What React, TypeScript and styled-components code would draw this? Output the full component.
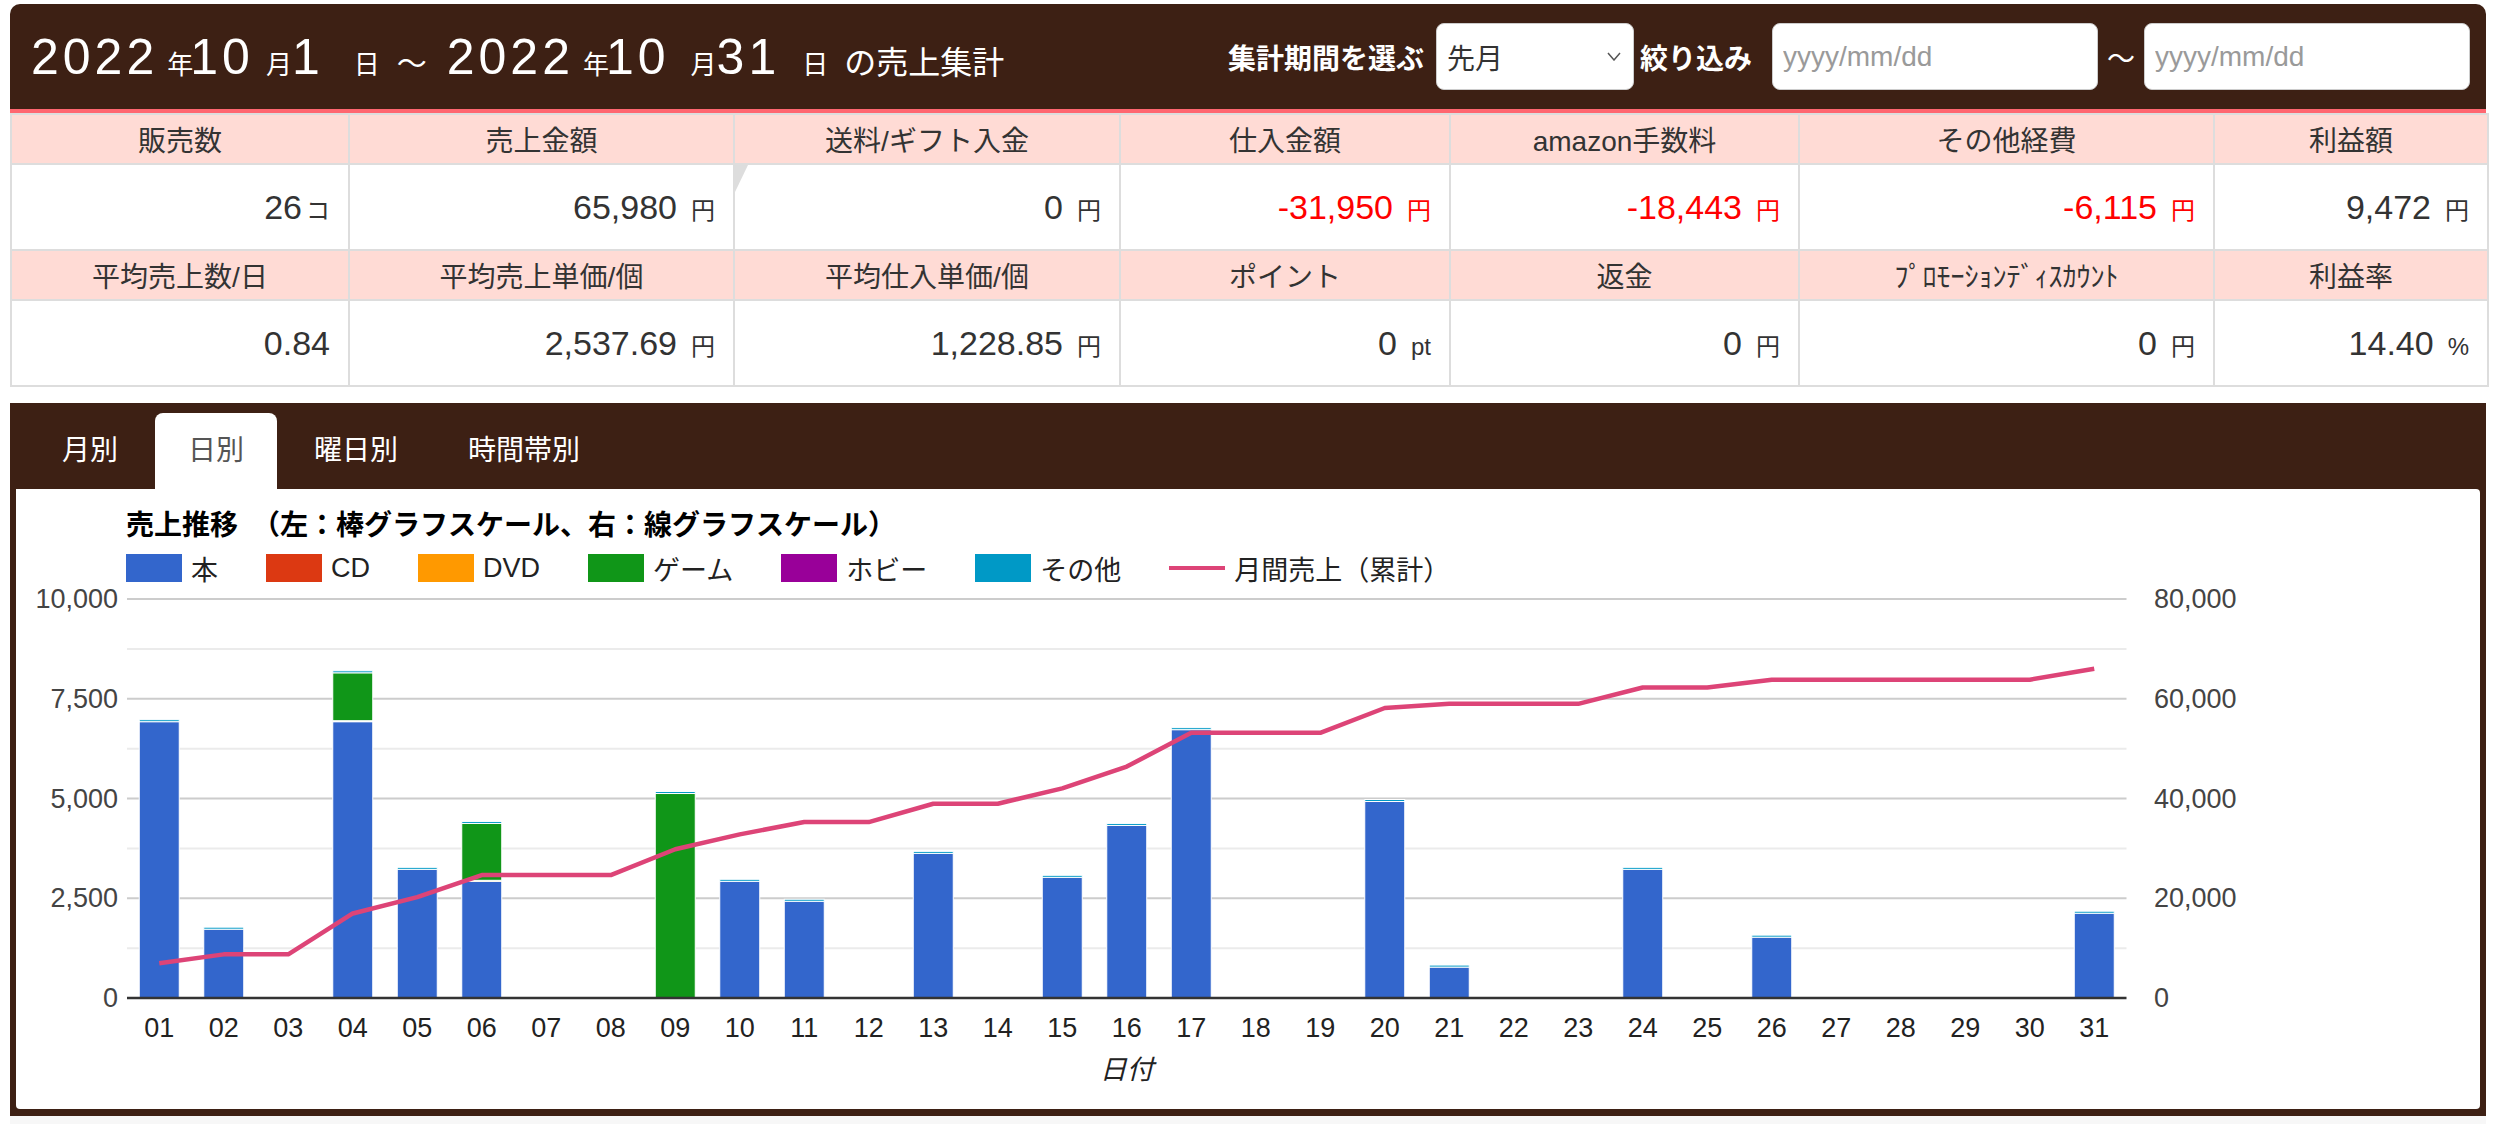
import React from "react";
import styled, { createGlobalStyle } from "styled-components";

const GlobalStyle = createGlobalStyle`
  * { box-sizing: border-box; }
  body {
    margin: 0;
    background: #fff;
    font-family: "Liberation Sans", "Noto Sans CJK JP", sans-serif;
    color: #333;
  }
`;

const BROWN = "#3d2014";

const Page = styled.div`
  padding: 4px 10px 0 10px;
`;

const Header = styled.header`
  display: flex;
  align-items: center;
  justify-content: space-between;
  height: 109px;
  padding: 0 16px 0 21px;
  background: ${BROWN};
  border-radius: 10px 10px 0 0;
  border-bottom: 4px solid #ff6670;
`;

const Title = styled.h1`
  margin: 0;
  color: #fff;
  font-weight: normal;
  white-space: nowrap;
  line-height: 1;
`;

const Big = styled.span<{ $ml?: number }>`
  font-size: 50px;
  letter-spacing: 4px;
  margin-left: ${(p) => p.$ml ?? 0}px;
`;

const Small = styled.span<{ $ml?: number; $size?: number }>`
  font-size: ${(p) => p.$size ?? 26}px;
  margin-left: ${(p) => p.$ml ?? 0}px;
`;

const Controls = styled.div`
  display: flex;
  align-items: center;
`;

const ControlLabel = styled.span<{ $gap: number }>`
  color: #fff;
  font-weight: bold;
  font-size: 28px;
  margin-right: ${(p) => p.$gap}px;
`;

const SelectBox = styled.div`
  display: flex;
  align-items: center;
  justify-content: space-between;
  width: 198px;
  height: 67px;
  padding: 0 12px 0 10px;
  margin-right: 6px;
  background: #fff;
  border: 1px solid #ccc;
  border-radius: 8px;
  font-size: 28px;
  color: #333;
`;

const DateInput = styled.input`
  width: 326px;
  height: 67px;
  padding: 0 10px;
  border: 1px solid #ccc;
  border-radius: 8px;
  font-family: "Liberation Sans", sans-serif;
  font-size: 28px;
  color: #333;
  &::placeholder {
    color: #9a9a9a;
  }
`;

const Tilde = styled.span`
  color: #fff;
  font-size: 28px;
  margin: 0 9px;
`;

const SummaryTable = styled.table`
  width: 100%;
  border-collapse: collapse;
  table-layout: fixed;
`;

const HeadCell = styled.th`
  height: 50px;
  background: #ffdbd5;
  border: 2px solid #ddd;
  font-size: 28px;
  font-weight: normal;
  color: #333;
  text-align: center;
  white-space: nowrap;
`;

const ValueCell = styled.td<{ $neg?: boolean; $mark?: boolean }>`
  position: relative;
  height: 86px;
  padding: 0 18px 0 0;
  border: 2px solid #ddd;
  text-align: right;
  white-space: nowrap;
  color: ${(p) => (p.$neg ? "#ff0000" : "#333")};
  &::before {
    content: "";
    display: ${(p) => (p.$mark ? "block" : "none")};
    position: absolute;
    left: 0;
    top: 0;
    border-top: 27px solid #ddd;
    border-right: 13px solid transparent;
  }
`;

const Num = styled.span`
  font-size: 34px;
`;

const UnitText = styled.span<{ $gap: number }>`
  font-size: 24px;
  margin-left: ${(p) => p.$gap}px;
`;

const ChartSection = styled.section`
  margin-top: 16px;
  padding: 0 6px 7px 6px;
  background: ${BROWN};
`;

const TabBar = styled.div`
  display: flex;
  padding: 10px 0 0 13px;
`;

const Tab = styled.div<{ $active?: boolean }>`
  height: 76px;
  line-height: 76px;
  padding: 0 33px;
  margin-right: 4px;
  font-size: 28px;
  color: ${(p) => (p.$active ? "#555" : "#fff")};
  background: ${(p) => (p.$active ? "#fff" : "transparent")};
  border-radius: 8px 8px 0 0;
`;

const ChartPanel = styled.div`
  height: 620px;
  padding-top: 18px;
  background: #fff;
  border-radius: 0 4px 4px 4px;
`;

const ChartTitle = styled.div`
  margin-left: 110px;
  font-size: 28px;
  font-weight: bold;
  line-height: 38px;
  color: #000;
`;

const Legend = styled.div`
  display: flex;
  align-items: center;
  height: 28px;
  margin: 9px 0 3px 110px;
`;

const LegendItem = styled.div`
  display: flex;
  align-items: center;
  margin-right: 48px;
  font-size: 27px;
  color: #222;
`;

const Swatch = styled.span<{ $color: string; $line?: boolean }>`
  display: inline-block;
  width: 56px;
  height: ${(p) => (p.$line ? 4 : 28)}px;
  margin-right: 9px;
  background: ${(p) => p.$color};
`;

const FooterStrip = styled.div`
  height: 12px;
  background: #f7f7f7;
`;

type Cell = { value: string; unit: string; gap?: number; neg?: boolean; mark?: boolean };

const rows: { heads: string[]; cells: Cell[] }[] = [
  {
    heads: ["販売数", "売上金額", "送料/ギフト入金", "仕入金額", "amazon手数料", "その他経費", "利益額"],
    cells: [
      { value: "26", unit: "コ", gap: 4 },
      { value: "65,980", unit: "円" },
      { value: "0", unit: "円", mark: true },
      { value: "-31,950", unit: "円", neg: true },
      { value: "-18,443", unit: "円", neg: true },
      { value: "-6,115", unit: "円", neg: true },
      { value: "9,472", unit: "円" },
    ],
  },
  {
    heads: ["平均売上数/日", "平均売上単価/個", "平均仕入単価/個", "ポイント", "返金", "ﾌﾟﾛﾓｰｼｮﾝﾃﾞｨｽｶｳﾝﾄ", "利益率"],
    cells: [
      { value: "0.84", unit: "" },
      { value: "2,537.69", unit: "円" },
      { value: "1,228.85", unit: "円" },
      { value: "0", unit: "pt" },
      { value: "0", unit: "円" },
      { value: "0", unit: "円" },
      { value: "14.40", unit: "%" },
    ],
  },
];

const colWidths = [338, 385, 386, 330, 349, 415, 274];

const series = [
  { key: "book", label: "本", color: "#3366cc" },
  { key: "cd", label: "CD", color: "#dc3912" },
  { key: "dvd", label: "DVD", color: "#ff9900" },
  { key: "game", label: "ゲーム", color: "#109618" },
  { key: "hobby", label: "ホビー", color: "#990099" },
  { key: "other", label: "その他", color: "#0099c6" },
];

// [本, CD, DVD, ゲーム, ホビー, その他] per day
const daily: number[][] = [
  [6925, 0, 0, 0, 0, 50],
  [1725, 0, 0, 0, 0, 50],
  [0, 0, 0, 0, 0, 0],
  [6925, 0, 25, 1200, 0, 50],
  [3225, 0, 0, 0, 0, 50],
  [2925, 0, 25, 1425, 0, 50],
  [0, 0, 0, 0, 0, 0],
  [0, 0, 0, 0, 0, 0],
  [0, 0, 0, 5125, 0, 50],
  [2925, 0, 0, 0, 0, 50],
  [2425, 0, 0, 0, 0, 50],
  [0, 0, 0, 0, 0, 0],
  [3625, 0, 0, 0, 0, 50],
  [0, 0, 0, 0, 0, 0],
  [3025, 0, 0, 0, 0, 50],
  [4325, 0, 0, 0, 0, 50],
  [6725, 0, 0, 0, 0, 50],
  [0, 0, 0, 0, 0, 0],
  [0, 0, 0, 0, 0, 0],
  [4925, 0, 0, 0, 0, 50],
  [775, 0, 0, 0, 0, 50],
  [0, 0, 0, 0, 0, 0],
  [0, 0, 0, 0, 0, 0],
  [3225, 0, 0, 0, 0, 50],
  [0, 0, 0, 0, 0, 0],
  [1525, 0, 0, 0, 0, 50],
  [0, 0, 0, 0, 0, 0],
  [0, 0, 0, 0, 0, 0],
  [0, 0, 0, 0, 0, 0],
  [0, 0, 0, 0, 0, 0],
  [2125, 0, 0, 0, 0, 50],
];

const SalesChart: React.FC = () => {
  const W = 2464;
  const H = 523;
  const left = 111;
  const step = 64.5;
  const top = 14;
  const bottom = 413;
  const k = (bottom - top) / 10000;
  const kLine = (bottom - top) / 80000;
  const font = `"Liberation Sans", "Noto Sans CJK JP", sans-serif`;

  let cum = 0;
  const points = daily.map((d, i) => {
    cum += d.reduce((a, b) => a + b, 0);
    return `${left + step * (i + 0.5)},${bottom - cum * kLine}`;
  });

  const leftLabels = ["10,000", "7,500", "5,000", "2,500", "0"];
  const rightLabels = ["80,000", "60,000", "40,000", "20,000", "0"];

  return (
    <svg width={W} height={H} viewBox={`0 0 ${W} ${H}`} style={{ display: "block" }}>
      {Array.from({ length: 8 }).map((_, i) => {
        const y = top + (i * (bottom - top)) / 8;
        return (
          <line key={i} x1={left} x2={left + step * 31} y1={y} y2={y} stroke={i % 2 ? "#ebebeb" : "#cccccc"} strokeWidth={2} />
        );
      })}
      {daily.map((d, i) => {
        const cx = left + step * (i + 0.5);
        let acc = 0;
        return d.map((v, s) => {
          if (!v) return null;
          const y = bottom - (acc + v) * k;
          acc += v;
          return <rect key={`${i}-${s}`} x={cx - 20} y={y} width={40} height={v * k} fill={series[s].color} stroke="#fff" strokeWidth={1} />;
        });
      })}
      <line x1={left} x2={left + step * 31} y1={bottom} y2={bottom} stroke="#333" strokeWidth={2.5} />
      <polyline points={points.join(" ")} fill="none" stroke="#dd4477" strokeWidth={4.5} strokeLinejoin="round" />
      {leftLabels.map((t, i) => (
        <text key={t} x={102} y={top + (i * (bottom - top)) / 4} textAnchor="end" dominantBaseline="central" fontSize={27} fill="#444" fontFamily={font}>
          {t}
        </text>
      ))}
      {rightLabels.map((t, i) => (
        <text key={t} x={2138} y={top + (i * (bottom - top)) / 4} dominantBaseline="central" fontSize={27} fill="#444" fontFamily={font}>
          {t}
        </text>
      ))}
      {daily.map((_, i) => (
        <text key={i} x={left + step * (i + 0.5)} y={443} textAnchor="middle" dominantBaseline="central" fontSize={27} fill="#222" fontFamily={font}>
          {String(i + 1).padStart(2, "0")}
        </text>
      ))}
      <text x={left + step * 15.5} y={485} textAnchor="middle" dominantBaseline="central" fontSize={27} fontStyle="italic" fill="#222" fontFamily={font}>
        日付
      </text>
    </svg>
  );
};

export default function App() {
  return (
    <Page>
      <GlobalStyle />
      <Header>
        <Title>
          <Big>2022</Big>
          <Small $ml={9}>年</Small>
          <Big $ml={-3}>10</Big>
          <Small $ml={12}>月</Small>
          <Big>1</Big>
          <Small $ml={30}>日</Small>
          <Small $ml={17} $size={30}>～</Small>
          <Big $ml={20}>2022</Big>
          <Small $ml={9}>年</Small>
          <Big $ml={-3}>10</Big>
          <Small $ml={21}>月</Small>
          <Big>31</Big>
          <Small $ml={22}>日</Small>
          <Small $ml={16} $size={32}>の売上集計</Small>
        </Title>
        <Controls>
          <ControlLabel $gap={12}>集計期間を選ぶ</ControlLabel>
          <SelectBox>
            <span>先月</span>
            <svg width="14" height="9" viewBox="0 0 14 9">
              <polyline points="1,1 7,8 13,1" fill="none" stroke="#555" strokeWidth="1.5" />
            </svg>
          </SelectBox>
          <ControlLabel $gap={20}>絞り込み</ControlLabel>
          <DateInput placeholder="yyyy/mm/dd" />
          <Tilde>～</Tilde>
          <DateInput placeholder="yyyy/mm/dd" />
        </Controls>
      </Header>

      <SummaryTable>
        <colgroup>
          {colWidths.map((w, i) => (
            <col key={i} style={{ width: w }} />
          ))}
        </colgroup>
        <tbody>
          {rows.map((r, ri) => (
            <React.Fragment key={ri}>
              <tr>
                {r.heads.map((h) => (
                  <HeadCell key={h}>{h}</HeadCell>
                ))}
              </tr>
              <tr>
                {r.cells.map((c, ci) => (
                  <ValueCell key={ci} $neg={c.neg} $mark={c.mark}>
                    <Num>{c.value}</Num>
                    {c.unit && <UnitText $gap={c.gap ?? 14}>{c.unit}</UnitText>}
                  </ValueCell>
                ))}
              </tr>
            </React.Fragment>
          ))}
        </tbody>
      </SummaryTable>

      <ChartSection>
        <TabBar>
          <Tab>月別</Tab>
          <Tab $active>日別</Tab>
          <Tab>曜日別</Tab>
          <Tab>時間帯別</Tab>
        </TabBar>
        <ChartPanel>
          <ChartTitle>売上推移　（左：棒グラフスケール、右：線グラフスケール）</ChartTitle>
          <Legend>
            {series.map((s) => (
              <LegendItem key={s.key}>
                <Swatch $color={s.color} />
                {s.label}
              </LegendItem>
            ))}
            <LegendItem>
              <Swatch $color="#dd4477" $line />
              月間売上（累計）
            </LegendItem>
          </Legend>
          <SalesChart />
        </ChartPanel>
      </ChartSection>
      <FooterStrip />
    </Page>
  );
}
